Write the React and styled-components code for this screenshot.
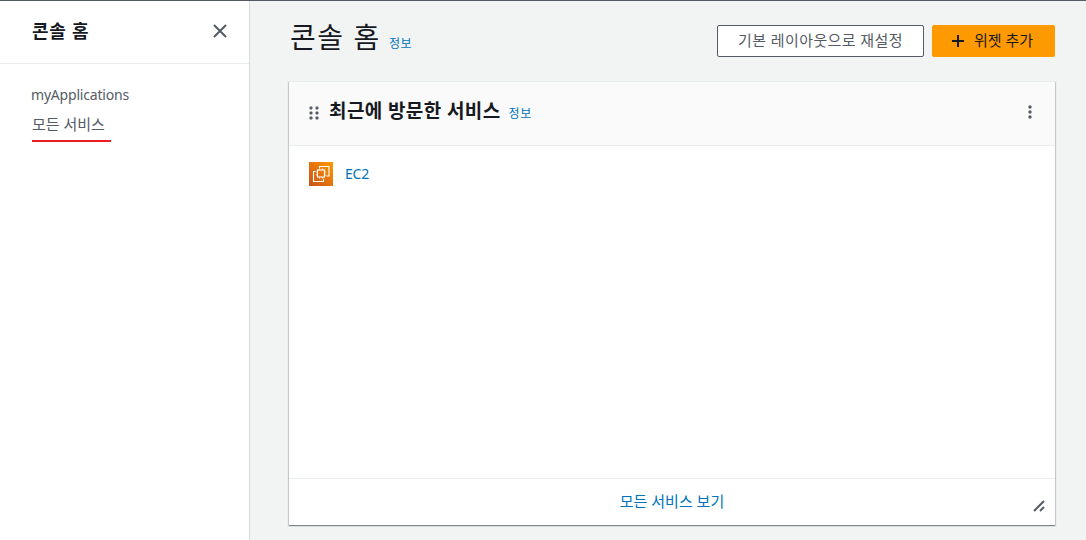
import styled, { createGlobalStyle } from "styled-components";

const GlobalStyle = createGlobalStyle`
  html, body {
    margin: 0;
    padding: 0;
    height: 100%;
    overflow: hidden;
  }
  body {
    font-family: "Noto Sans", "Noto Sans CJK KR", sans-serif;
    color: #16191f;
    background-color: #f2f3f3;
  }
  * {
    box-sizing: border-box;
  }
`;

const Page = styled.div`
  display: flex;
  height: 540px;
  border-top: 1px solid #545b64;
`;

const Sidebar = styled.aside`
  width: 250px;
  flex-shrink: 0;
  background-color: #ffffff;
  border-right: 1px solid #d5dbdb;
`;

const SideHeader = styled.div`
  height: 63px;
  display: flex;
  align-items: center;
  justify-content: space-between;
  padding: 0 21px 2px 32px;
  border-bottom: 1px solid #eaeded;

  h2 {
    margin: 0;
    font-size: 18px;
    line-height: 24px;
    font-weight: 700;
    letter-spacing: 0.7px;
  }
`;

const SideNav = styled.nav`
  display: flex;
  flex-direction: column;
  align-items: flex-start;
  padding: 21px 0 0 31px;
`;

const NavItem = styled.a`
  font-size: 14px;
  line-height: 20px;
  letter-spacing: -0.2px;
  color: #545b64;
  margin-bottom: 9px;
`;

const ActiveItem = styled(NavItem)`
  margin-left: 1px;
  margin-bottom: 0;
  padding-bottom: 6px;
  width: 79px;
  font-size: 15px;
  letter-spacing: 0;
  border-bottom: 2px solid #ec1c24;
`;

const Main = styled.main`
  flex: 1;
  padding: 0 31px 0 39px;
`;

const TitleRow = styled.div`
  height: 80px;
  display: flex;
  justify-content: space-between;
  padding-top: 24px;
`;

const TitleGroup = styled.div`
  display: flex;
  align-items: baseline;
  gap: 8px;
  height: 32px;
  padding-left: 1px;

  h1 {
    margin: 0;
    font-size: 28px;
    line-height: 25px;
    font-weight: 400;
    letter-spacing: 1.6px;
  }
`;

const InfoLink = styled.a`
  font-size: 12px;
  line-height: 16px;
  letter-spacing: 0.5px;
  color: #0073bb;
`;

const Actions = styled.div`
  display: flex;
  gap: 8px;
`;

const Button = styled.button`
  height: 32px;
  padding: ${(p) => (p.$primary ? "0 3px 3px 0" : "0 0 3px")};
  display: flex;
  align-items: center;
  justify-content: center;
  gap: 9px;
  font-family: inherit;
  font-size: 15px;
  letter-spacing: ${(p) => (p.$primary ? "0" : "0.4px")};
  border-radius: 2px;
  width: ${(p) => p.$width}px;
  color: ${(p) => (p.$primary ? "#16191f" : "#545b64")};
  background-color: ${(p) => (p.$primary ? "#ff9900" : "#ffffff")};
  border: 1px solid ${(p) => (p.$primary ? "#ff9900" : "#545b64")};
`;

const PlusIcon = styled.svg`
  margin-top: 3px;
`;

const Panel = styled.section`
  height: 444px;
  display: flex;
  flex-direction: column;
  background-color: #ffffff;
  border-top: 1px solid #eaeded;
  box-shadow: 0 1px 1px 0 rgba(0, 28, 36, 0.3), 1px 1px 1px 0 rgba(0, 28, 36, 0.15),
    -1px 1px 1px 0 rgba(0, 28, 36, 0.15);
`;

const PanelHeader = styled.header`
  height: 64px;
  flex-shrink: 0;
  display: flex;
  align-items: center;
  padding: 0 20px;
  background-color: #fafafa;
  border-bottom: 1px solid #eaeded;

  h3 {
    margin: 0 8px 5px 10px;
    font-size: 19px;
    line-height: 24px;
    font-weight: 700;
    letter-spacing: 0.4px;
  }
`;

const DragDots = styled.svg`
  margin-bottom: 2px;
`;

const MenuDots = styled.svg`
  margin-left: auto;
  margin-right: 3px;
  margin-bottom: 4px;
`;

const PanelBody = styled.div`
  flex: 1;
  padding: 16px 20px;
`;

const ServiceRow = styled.div`
  display: flex;
  align-items: center;
  gap: 12px;
  height: 24px;
`;

const ServiceIcon = styled.span`
  width: 24px;
  height: 24px;
  display: flex;
  background: linear-gradient(45deg, #c8511b, #ff9900);
`;

const ServiceLink = styled.a`
  font-size: 14px;
  line-height: 22px;
  margin-bottom: 1px;
  letter-spacing: -0.2px;
  color: #0073bb;
`;

const PanelFooter = styled.footer`
  height: 47px;
  flex-shrink: 0;
  position: relative;
  display: flex;
  align-items: center;
  justify-content: center;
  padding-bottom: 3px;
  border-top: 1px solid #eaeded;
`;

const FooterLink = styled.a`
  font-size: 15px;
  color: #0073bb;
`;

const ResizeHandle = styled.svg`
  position: absolute;
  right: 10px;
  bottom: 13px;
`;

export default function App() {
  return (
    <>
      <GlobalStyle />
      <Page>
        <Sidebar>
          <SideHeader>
            <h2>콘솔 홈</h2>
            <svg width="16" height="16" viewBox="0 0 16 16" fill="none" stroke="#545b64" strokeWidth="2">
              <path d="M2 2l12 12M14 2L2 14" />
            </svg>
          </SideHeader>
          <SideNav>
            <NavItem>myApplications</NavItem>
            <ActiveItem>모든 서비스</ActiveItem>
          </SideNav>
        </Sidebar>
        <Main>
          <TitleRow>
            <TitleGroup>
              <h1>콘솔 홈</h1>
              <InfoLink>정보</InfoLink>
            </TitleGroup>
            <Actions>
              <Button $width={207}>기본 레이아웃으로 재설정</Button>
              <Button $primary $width={123}>
                <PlusIcon width="14" height="14" viewBox="0 0 14 14" fill="none" stroke="#16191f" strokeWidth="2">
                  <path d="M7 1v12M1 7h12" />
                </PlusIcon>
                위젯 추가
              </Button>
            </Actions>
          </TitleRow>
          <Panel>
            <PanelHeader>
              <DragDots width="10" height="14" viewBox="0 0 10 14" fill="#545b64">
                <rect x="0.5" y="0.5" width="3" height="3" rx="1" />
                <rect x="6.5" y="0.5" width="3" height="3" rx="1" />
                <rect x="0.5" y="5.5" width="3" height="3" rx="1" />
                <rect x="6.5" y="5.5" width="3" height="3" rx="1" />
                <rect x="0.5" y="10.5" width="3" height="3" rx="1" />
                <rect x="6.5" y="10.5" width="3" height="3" rx="1" />
              </DragDots>
              <h3>최근에 방문한 서비스</h3>
              <InfoLink>정보</InfoLink>
              <MenuDots width="4" height="14" viewBox="0 0 4 14" fill="#545b64">
                <circle cx="2" cy="2" r="1.7" />
                <circle cx="2" cy="7" r="1.7" />
                <circle cx="2" cy="12" r="1.7" />
              </MenuDots>
            </PanelHeader>
            <PanelBody>
              <ServiceRow>
                <ServiceIcon>
                  <svg width="24" height="24" viewBox="0 0 24 24" fill="none" stroke="#ffffff" strokeWidth="1.1">
                    <path d="M10.5 6V4.5h9.5v9.5h-2.5" />
                    <path d="M6.5 9.5H4.5v10h10v-2.5" />
                    <rect x="8.5" y="8" width="7" height="7" />
                    <path
                      d="M10.5 6.3V8M13.5 6.3V8M10.5 15v1.7M13.5 15v1.7M6.8 10h1.7M6.8 13h1.7M15.5 10h1.7M15.5 13h1.7"
                      strokeWidth="0.8"
                    />
                  </svg>
                </ServiceIcon>
                <ServiceLink>EC2</ServiceLink>
              </ServiceRow>
            </PanelBody>
            <PanelFooter>
              <FooterLink>모든 서비스 보기</FooterLink>
              <ResizeHandle width="12" height="12" viewBox="0 0 12 12" fill="none" stroke="#545b64" strokeWidth="2">
                <path d="M1 11L11 1M7 11l4-4" />
              </ResizeHandle>
            </PanelFooter>
          </Panel>
        </Main>
      </Page>
    </>
  );
}
